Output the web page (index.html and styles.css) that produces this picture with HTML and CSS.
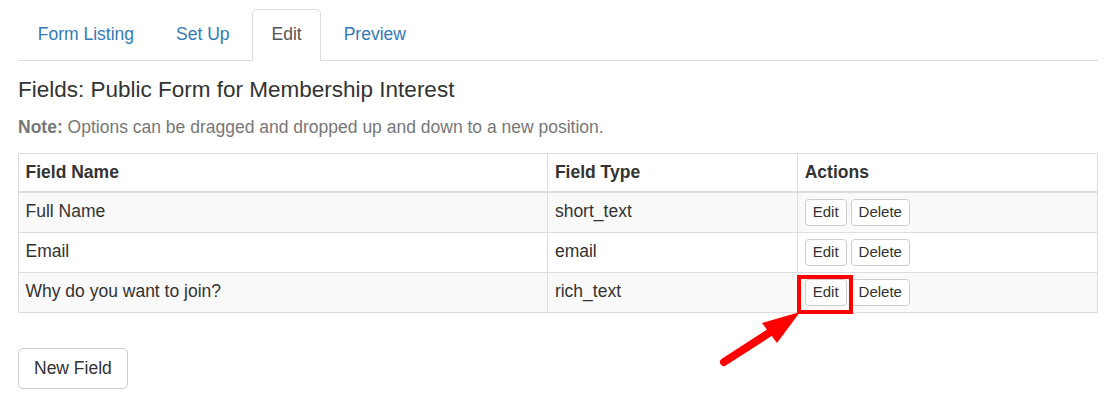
FILE: index.html
```html
<!DOCTYPE html>
<html>
<head>
<meta charset="utf-8">
<link rel="stylesheet" href="styles.css">
</head>
<body>
<div class="page">
  <ul class="tabs">
    <li class="tab"><a class="tab-link" href="#">Form Listing</a></li>
    <li class="tab"><a class="tab-link" href="#">Set Up</a></li>
    <li class="tab active"><a class="tab-link" href="#">Edit</a></li>
    <li class="tab"><a class="tab-link" href="#">Preview</a></li>
  </ul>
  <h4 class="title">Fields: Public Form for Membership Interest</h4>
  <p class="note"><strong>Note:</strong> Options can be dragged and dropped up and down to a new position.</p>
  <table class="fields">
    <colgroup>
      <col class="col-name">
      <col class="col-type">
      <col class="col-actions">
    </colgroup>
    <thead>
      <tr><th>Field Name</th><th>Field Type</th><th>Actions</th></tr>
    </thead>
    <tbody>
      <tr><td>Full Name</td><td>short_text</td><td><div class="actions"><button class="btn-xs">Edit</button><button class="btn-xs">Delete</button></div></td></tr>
      <tr><td>Email</td><td>email</td><td><div class="actions"><button class="btn-xs">Edit</button><button class="btn-xs">Delete</button></div></td></tr>
      <tr><td>Why do you want to join?</td><td>rich_text</td><td><div class="actions"><button class="btn-xs">Edit</button><button class="btn-xs">Delete</button></div></td></tr>
    </tbody>
  </table>
  <button class="btn">New Field</button>
  <svg class="annotation" width="1110" height="414" viewBox="0 0 1110 414">
    <rect x="799" y="277" width="52" height="35" fill="none" stroke="#ff0000" stroke-width="4"/>
    <line x1="724" y1="362" x2="772" y2="331" stroke="#ff0000" stroke-width="8" stroke-linecap="round"/>
    <polygon points="800,312 762,323 777,343" fill="#ff0000"/>
  </svg>
</div>
</body>
</html>
```
FILE: styles.css
```css
html, body {
  margin: 0;
  padding: 0;
  background: #fff;
}
body {
  font-family: "Liberation Sans", Arial, sans-serif;
  font-size: 17.5px;
  line-height: 25px;
  color: #333;
}
.page {
  position: relative;
  width: 1080px;
  height: 405px;
  padding: 9px 12px 0 18px;
}
.tabs {
  list-style: none;
  margin: 0;
  padding: 0;
  display: flex;
  border-bottom: 1px solid #ddd;
}
.tab {
  margin-right: 2.5px;
  margin-bottom: -1px;
}
.tab-link {
  display: block;
  padding: 12px 18.75px 13px;
  line-height: 25px;
  border: 1px solid transparent;
  border-radius: 5px 5px 0 0;
  color: #337ab7;
  text-decoration: none;
}
.tab.active .tab-link {
  color: #555;
  background: #fff;
  border-color: #ddd;
  border-bottom-color: transparent;
}
.title {
  margin: 17px 0 12.5px;
  font-size: 22.5px;
  font-weight: 500;
  line-height: 1.1;
  color: #333;
}
.note {
  margin: 0 0 12.5px;
  color: #777;
}
.fields {
  width: 1080px;
  border-collapse: collapse;
  border: 1px solid #ddd;
  margin-bottom: 35px;
}
.col-name { width: 530px; }
.col-type { width: 250px; }
.col-actions { width: 300px; }
.fields th,
.fields td {
  border: 1px solid #ddd;
  text-align: left;
  vertical-align: top;
  line-height: 25px;
}
.fields th {
  padding: 6.5px 6.5px 6px;
  font-weight: bold;
  border-bottom: 2px solid #ddd;
}
.fields td {
  padding: 6px 6.5px;
}
.fields tbody tr:nth-child(odd) {
  background: #f9f9f9;
}
.actions {
  display: flex;
  gap: 4px;
}
.btn-xs {
  font-family: "Liberation Sans", Arial, sans-serif;
  font-size: 15px;
  line-height: 23px;
  padding: 0 7px 2px;
  color: #333;
  background: #fff;
  border: 1px solid #ccc;
  border-radius: 3.75px;
  margin: 0;
}
.btn {
  display: block;
  font-family: "Liberation Sans", Arial, sans-serif;
  font-size: 17.5px;
  line-height: 25px;
  padding: 7px 15px;
  color: #333;
  background: #fff;
  border: 1px solid #ccc;
  border-radius: 5px;
  margin: 0;
}
.annotation {
  position: absolute;
  top: 0;
  left: 0;
  pointer-events: none;
}
```
